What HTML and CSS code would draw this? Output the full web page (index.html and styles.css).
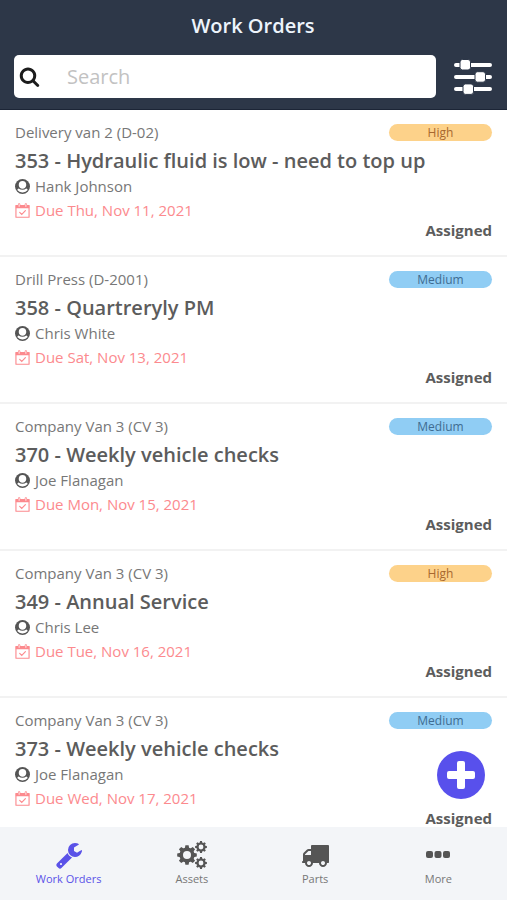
FILE: index.html
```html
<!DOCTYPE html>
<html lang="en">
<head>
<meta charset="utf-8">
<meta name="viewport" content="width=device-width, initial-scale=1">
<title>Work Orders</title>
<link rel="stylesheet" href="styles.css">
</head>
<body>
<svg class="symbols" aria-hidden="true">
  <symbol id="user" viewBox="0 0 16 16">
    <circle cx="8" cy="8" r="8" fill="currentColor"/>
    <path fill="#fff" d="M8 2.200c2.600 0 4 1.700 4 4 0 1.400-.5 2.600-1.300 3.400 1.400.2 2.400.9 2.900 2.200A6.800 6.800 0 0 1 8 14.400a6.800 6.800 0 0 1-5.600-2.600c.5-1.300 1.500-2 2.900-2.200C4.500 8.800 4 7.600 4 6.200c0-2.300 1.400-4 4-4z"/>
    <path fill="none" stroke="currentColor" stroke-width="1.300" d="M4.400 9.600c2 1.700 5.200 1.700 7.200 0"/>
  </symbol>
  <symbol id="calendar" viewBox="0 0 16 16">
    <path fill="none" stroke="currentColor" stroke-width="1.200" stroke-linejoin="round" d="M1 2.600h14v12.600H1z"/>
    <path fill="currentColor" d="M.8 2.400h14.400v3.200H.8z"/>
    <path fill="none" stroke="currentColor" stroke-width="2.600" stroke-linecap="round" d="M4.400 1.600v2M11.600 1.600v2"/>
    <path fill="none" stroke="#fff" stroke-width=".9" stroke-linecap="round" d="M4.400 1.600v2M11.600 1.600v2"/>
    <path fill="none" stroke="currentColor" stroke-width="1.200" stroke-linecap="round" d="M5 10l2.200 2.200 3.900-4"/>
  </symbol>
  <symbol id="gear" viewBox="-10 -10 20 20">
    <circle r="5.800" fill="none" stroke="currentColor" stroke-width="3.600"/>
    <g fill="currentColor">
      <path id="teeth" d="M-1.600-9.800h3.200l.6 3.300h-4.400zM-1.600 9.800h3.200l.6-3.300h-4.400zM-9.800-1.600v3.200l3.300.6v-4.400zM9.800-1.600v3.200l-3.300.6v-4.400z"/>
      <use href="#teeth" transform="rotate(45)"/>
    </g>
  </symbol>
</svg>

<div class="app">
  <header class="header">
    <h1>Work Orders</h1>
    <form class="tools">
      <div class="search">
        <label for="search" aria-label="Search"><svg viewBox="0 0 1792 1792"><path fill="currentColor" d="M1216 832q0-185-131.500-316.500t-316.500-131.500-316.500 131.500-131.500 316.500 131.500 316.500 316.500 131.500 316.500-131.500 131.500-316.500zm512 832q0 52-38 90t-90 38q-54 0-90-38l-343-342q-179 124-399 124-143 0-273.500-55.500t-225-150-150-225-55.500-273.500 55.500-273.500 150-225 225-150 273.500-55.500 273.500 55.500 225 150 150 225 55.500 273.500q0 220-124 399l343 343q37 37 37 90z"/></svg></label>
        <input id="search" type="text" placeholder="Search">
      </div>
      <button class="filter" type="button" aria-label="Filter">
        <svg viewBox="0 0 38 36" fill="#fff"><path d="M2 4h34a1.900 1.900 0 0 1 0 4H2a1.900 1.900 0 0 1 0-4zM2 16h34a1.900 1.900 0 0 1 0 4H2a1.900 1.900 0 0 1 0-4zM2 28h34a1.900 1.900 0 0 1 0 4H2a1.900 1.900 0 0 1 0-4z"/><g stroke="#2d3748"><rect x="6" y=".5" width="10.500" height="10.500" rx="2.500"/><rect x="21" y="12.700" width="10.500" height="10.500" rx="2.500"/><rect x="9" y="24.900" width="10.500" height="10.500" rx="2.500"/></g></svg>
      </button>
    </form>
  </header>

  <main class="list">
    <article class="order">
      <div class="top"><span>Delivery van 2 (D-02)</span><span class="badge high">High</span></div>
      <h2>353 - Hydraulic fluid is low - need to top up</h2>
      <p><svg><use href="#user"/></svg>Hank Johnson</p>
      <p class="due"><svg><use href="#calendar"/></svg>Due Thu, Nov 11, 2021</p>
      <strong>Assigned</strong>
    </article>
    <article class="order">
      <div class="top"><span>Drill Press (D-2001)</span><span class="badge medium">Medium</span></div>
      <h2>358 - Quartreryly PM</h2>
      <p><svg><use href="#user"/></svg>Chris White</p>
      <p class="due"><svg><use href="#calendar"/></svg>Due Sat, Nov 13, 2021</p>
      <strong>Assigned</strong>
    </article>
    <article class="order">
      <div class="top"><span>Company Van 3 (CV 3)</span><span class="badge medium">Medium</span></div>
      <h2>370 - Weekly vehicle checks</h2>
      <p><svg><use href="#user"/></svg>Joe Flanagan</p>
      <p class="due"><svg><use href="#calendar"/></svg>Due Mon, Nov 15, 2021</p>
      <strong>Assigned</strong>
    </article>
    <article class="order">
      <div class="top"><span>Company Van 3 (CV 3)</span><span class="badge high">High</span></div>
      <h2>349 - Annual Service</h2>
      <p><svg><use href="#user"/></svg>Chris Lee</p>
      <p class="due"><svg><use href="#calendar"/></svg>Due Tue, Nov 16, 2021</p>
      <strong>Assigned</strong>
    </article>
    <article class="order">
      <div class="top"><span>Company Van 3 (CV 3)</span><span class="badge medium">Medium</span></div>
      <h2>373 - Weekly vehicle checks</h2>
      <p><svg><use href="#user"/></svg>Joe Flanagan</p>
      <p class="due"><svg><use href="#calendar"/></svg>Due Wed, Nov 17, 2021</p>
      <strong>Assigned</strong>
    </article>
  </main>

  <nav class="tabs">
    <button class="add" type="button" aria-label="Add work order"><svg viewBox="0 0 28 28"><path fill="#fff" d="M12 0h4a2 2 0 0 1 2 2v8h8a2 2 0 0 1 2 2v4a2 2 0 0 1-2 2h-8v8a2 2 0 0 1-2 2h-4a2 2 0 0 1-2-2v-8H2a2 2 0 0 1-2-2v-4a2 2 0 0 1 2-2h8V2a2 2 0 0 1 2-2z"/></svg></button>
    <a class="active" href="#orders"><svg viewBox="0 0 1792 1792"><path fill="currentColor" d="M448 1472q0-26-19-45t-45-19-45 19-19 45 19 45 45 19 45-19 19-45zm644-420l-682 682q-37 37-90 37-52 0-91-37l-106-108q-38-36-38-90 0-53 38-91l681-681q39 98 114.500 173.500t173.500 114.500zm634-435q0 39-23 106-47 134-164.500 217.500t-258.500 83.500q-185 0-316.500-131.500t-131.500-316.500 131.500-316.500 316.500-131.500q58 0 121.500 16.500t107.500 46.500q16 11 16 28t-16 28l-293 169v224l193 107q5-3 79-48.500t135.500-81 70.500-35.500q15 0 23.500 10t8.500 25z"/></svg>Work Orders</a>
    <a href="#assets"><svg class="wide" viewBox="0 0 30 28"><use href="#gear" x="0" y="4" width="20" height="20"/><use href="#gear" x="18" y="0" width="12" height="12"/><use href="#gear" x="18" y="16" width="12" height="12"/></svg>Assets</a>
    <a href="#parts"><svg class="wide" viewBox="0 0 1792 1792"><path fill="currentColor" d="M640 1408q0-52-38-90t-90-38-90 38-38 90 38 90 90 38 90-38 38-90zm-384-512h384v-256h-158q-13 0-22 9l-195 195q-9 9-9 22v30zm1280 512q0-52-38-90t-90-38-90 38-38 90 38 90 90 38 90-38 38-90zm256-1088v1024q0 15-4 26.500t-13.500 18.500-16.500 11.500-23.500 6-22.500 2-25.500 0-22.500-.5q0 106-75 181t-181 75-181-75-75-181h-384q0 106-75 181t-181 75-181-75-75-181h-64q-3 0-22.500.5t-25.500 0-22.500-2-23.500-6-16.500-11.500-13.500-18.500-4-26.500q0-26 19-45t45-19v-320q0-8-.5-35t0-38 2.500-34.500 6.500-37 14-30.500 22.500-30l198-198q19-19 50.500-32t58.500-13h160v-192q0-26 19-45t45-19h1024q26 0 45 19t19 45z"/></svg>Parts</a>
    <a href="#more"><svg viewBox="0 0 28 28" fill="currentColor"><rect x="2" y="10" width="7" height="7" rx="2"/><rect x="10.500" y="10" width="7" height="7" rx="2"/><rect x="19" y="10" width="7" height="7" rx="2"/></svg>More</a>
  </nav>
</div>
</body>
</html>
```
FILE: styles.css
```css
* {
  box-sizing: border-box;
}

body {
  margin: 0;
  background: #fff;
  color: #5c5c5c;
  font-family: "Open Sans", sans-serif;
}

h1, h2, p {
  margin: 0;
}

svg {
  display: block;
}

.symbols {
  position: absolute;
  width: 0;
  height: 0;
}

.app {
  display: flex;
  flex-direction: column;
  height: 100vh;
}

.header {
  flex: none;
  padding: 12px 15px 11px 14px;
  background: #2d3748;
  border-bottom: 1px solid #1c2536;
}

h1 {
  color: #edf4fc;
  font-size: 20px;
  font-weight: 600;
  line-height: 28px;
  text-align: center;
}

.tools {
  display: flex;
  align-items: center;
  gap: 18px;
  margin-top: 15px;
}

.search {
  display: flex;
  flex: 1;
  align-items: center;
  height: 43px;
  padding-left: 5px;
  background: #fff;
  border-radius: 5px;
}

.search label {
  color: #1c1c1c;
}

.search label svg {
  width: 21px;
  height: 21px;
}

.search input {
  flex: 1;
  min-width: 0;
  height: 100%;
  padding: 0 12px 0 27px;
  border: 0;
  outline: 0;
  background: none;
  color: #555;
  font: 20px "Open Sans", sans-serif;
}

.search input::placeholder {
  color: #c2c2c2;
}

.filter {
  padding: 0;
  border: 0;
  background: none;
}

.filter svg {
  width: 38px;
  height: 36px;
}

.list {
  flex: 1;
  min-height: 0;
  overflow: hidden;
}

.order {
  display: flex;
  flex-direction: column;
  padding: 11px 15px 17px;
  border-bottom: 2px solid #f2f2f2;
}

.top {
  display: flex;
  align-items: center;
  justify-content: space-between;
  color: #777;
  font-size: 15px;
  line-height: 22px;
}

.badge {
  width: 103px;
  border-radius: 9px;
  font-size: 12px;
  line-height: 17px;
  text-align: center;
}

.high {
  background: #fdd28a;
  color: #a8682f;
}

.medium {
  background: #90cdf4;
  color: #3f6c91;
}

h2 {
  margin-top: 5px;
  font-size: 20px;
  font-weight: 600;
  line-height: 26px;
}

.order p {
  display: flex;
  align-items: center;
  gap: 5px;
  color: #777;
  font-size: 15px;
  line-height: 24px;
}

.order p svg {
  width: 15px;
  height: 15px;
  color: #555;
}

.order .due,
.order .due svg {
  color: #fc8a8e;
}

.order strong {
  align-self: flex-end;
  font-size: 15px;
  line-height: 16px;
}

.tabs {
  position: relative;
  display: grid;
  flex: none;
  grid-template-columns: repeat(4, 1fr);
  padding: 14px 7px 12px;
  background: #f3f5f8;
}

.tabs a {
  display: flex;
  flex-direction: column;
  align-items: center;
  color: #777;
  font-size: 11px;
  line-height: 19px;
  text-decoration: none;
}

.tabs a svg {
  width: 28px;
  height: 28px;
  color: #555;
}

.tabs a .wide {
  width: 30px;
}

.tabs .active,
.tabs .active svg {
  color: #5a52e8;
}

.add {
  position: absolute;
  right: 22px;
  bottom: 101px;
  display: grid;
  place-items: center;
  width: 48px;
  height: 48px;
  padding: 0;
  border: 0;
  border-radius: 50%;
  background: #5850ec;
}

.add svg {
  width: 28px;
  height: 28px;
}
```
